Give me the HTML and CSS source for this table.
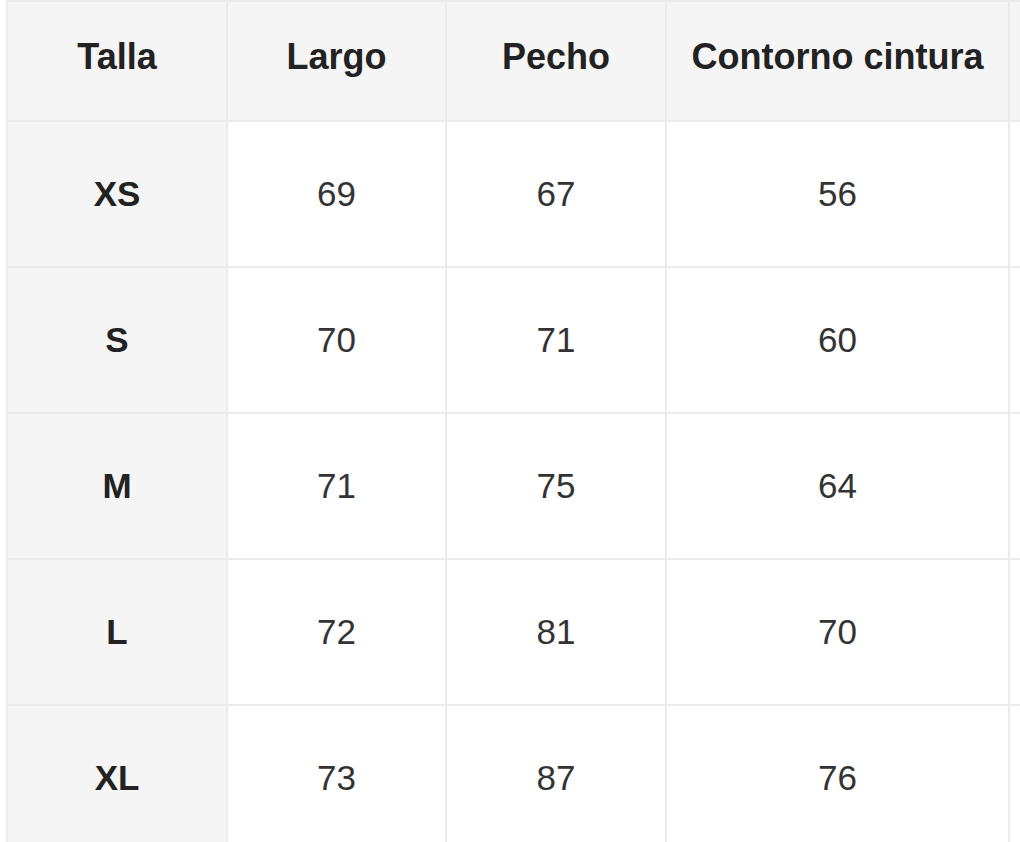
FILE: index.html
```html
<!DOCTYPE html>
<html lang="es">
<head>
<meta charset="utf-8">
<title>Guía de tallas</title>
<link rel="stylesheet" href="styles.css">
</head>
<body>
<div class="size-table">
  <div class="cell head">Talla</div>
  <div class="cell head">Largo</div>
  <div class="cell head">Pecho</div>
  <div class="cell head">Contorno cintura</div>
  <div class="cell head"></div>

  <div class="cell label">XS</div>
  <div class="cell">69</div>
  <div class="cell">67</div>
  <div class="cell">56</div>
  <div class="cell"></div>

  <div class="cell label">S</div>
  <div class="cell">70</div>
  <div class="cell">71</div>
  <div class="cell">60</div>
  <div class="cell"></div>

  <div class="cell label">M</div>
  <div class="cell">71</div>
  <div class="cell">75</div>
  <div class="cell">64</div>
  <div class="cell"></div>

  <div class="cell label">L</div>
  <div class="cell">72</div>
  <div class="cell">81</div>
  <div class="cell">70</div>
  <div class="cell"></div>

  <div class="cell label">XL</div>
  <div class="cell">73</div>
  <div class="cell">87</div>
  <div class="cell">76</div>
  <div class="cell"></div>
</div>
</body>
</html>
```
FILE: styles.css
```css
html, body {
  margin: 0;
  padding: 0;
  background: #ffffff;
  overflow: hidden;
}

body {
  font-family: "Liberation Sans", Arial, sans-serif;
  padding-left: 6px;
}

.size-table {
  display: grid;
  width: max-content;
  grid-template-columns: 220px 219px 220px 343px 300px;
  grid-template-rows: 120px repeat(5, 146px);
  border-left: 2px solid #ebebeb;
  border-top: 2px solid #ebebeb;
}

.cell {
  box-sizing: border-box;
  border-right: 2px solid #ebebeb;
  border-bottom: 2px solid #ebebeb;
  display: flex;
  align-items: center;
  justify-content: center;
  font-size: 35px;
  color: #333333;
  background: #ffffff;
}

.head {
  background: #f5f5f5;
  font-weight: bold;
  font-size: 36px;
  color: #222222;
  padding-bottom: 8px;
}

.label {
  background: #f5f5f5;
  font-weight: bold;
  color: #222222;
}
```
